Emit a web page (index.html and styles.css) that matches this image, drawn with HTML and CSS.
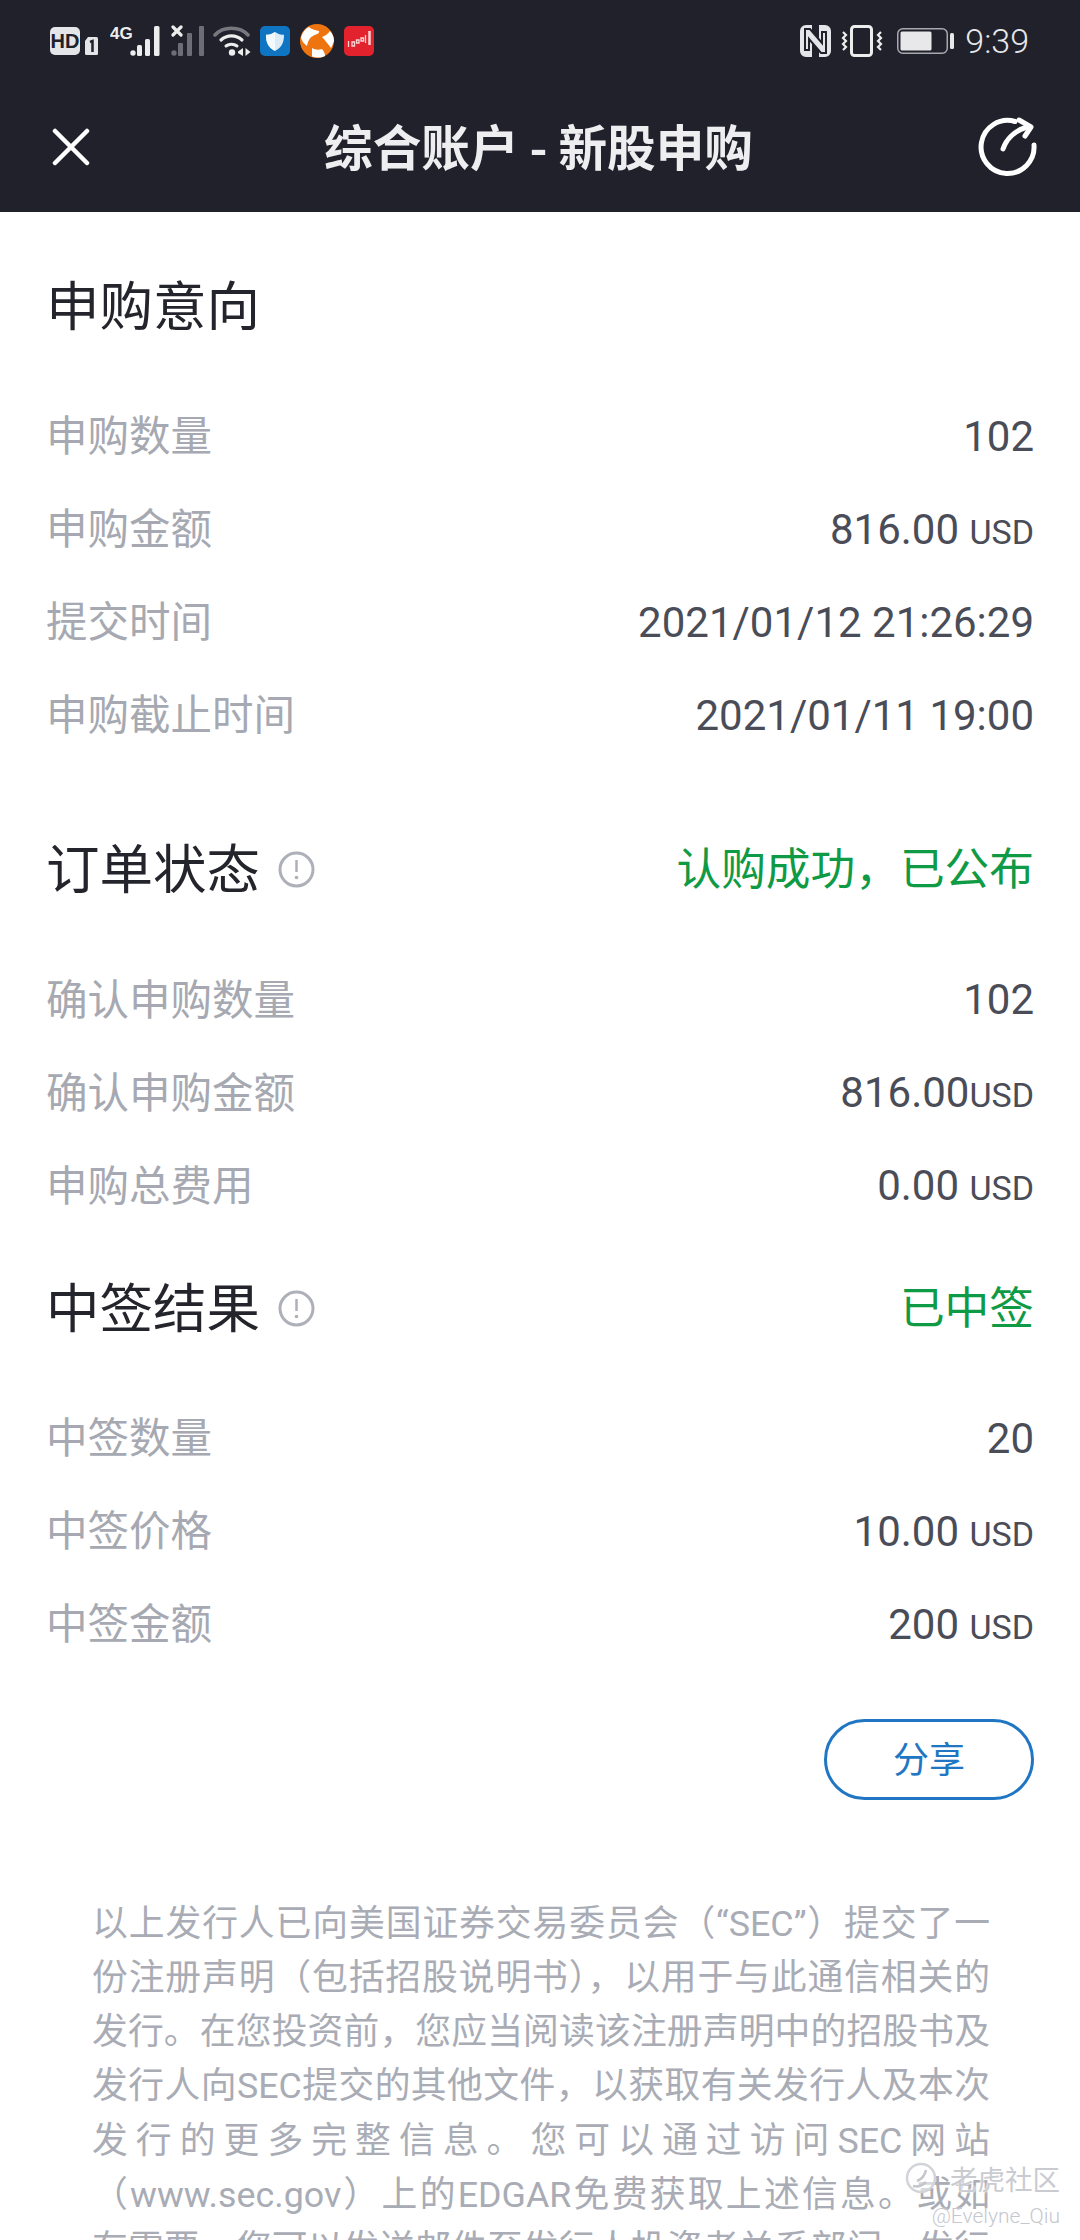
FILE: index.html
```html
<!DOCTYPE html>
<html lang="zh">
<head>
<meta charset="utf-8">
<title>综合账户 - 新股申购</title>
<link rel="stylesheet" href="styles.css">
</head>
<body>
<div class="page">
  <header class="header">
    <div class="statusbar">
      <div class="status-group">
        <svg class="i" width="48" height="30" viewBox="0 0 48 30"><rect x="0" y="1" width="30" height="28" rx="5" fill="#e4e5e8"/><text x="15" y="21.500" class="hd">HD</text><path d="M35 15l3-4h8.500a1.500 1.500 0 0 1 1.500 1.500v15a1.500 1.500 0 0 1-1.500 1.500h-10a1.500 1.500 0 0 1-1.500-1.500z" fill="#e4e5e8"/><path d="M40 16l2.500-1v11" fill="none" stroke="#20212b" stroke-width="2.500"/></svg>
        <svg class="i gap12" width="50" height="32" viewBox="0 0 50 32"><text x="0" y="13.500" class="fourg">4G</text><circle cx="23" cy="28" r="2.700" fill="#eceded"/><rect x="27" y="20" width="5" height="11" rx="1.500" fill="#eceded"/><rect x="35" y="14" width="5" height="17" rx="1.500" fill="#eceded"/><rect x="44" y="1" width="5.500" height="30" rx="1.500" fill="#eceded"/></svg>
        <svg class="i gap11" width="33" height="32" viewBox="0 0 33 32"><path d="M2 2l8 8M10 2l-8 8" stroke="#eceded" stroke-width="3.200" stroke-linecap="round"/><circle cx="3" cy="28" r="2.700" fill="#6d6e75"/><rect x="7" y="18" width="5" height="13" rx="1" fill="#6d6e75"/><rect x="16" y="8" width="5" height="23" rx="1" fill="#6d6e75"/><rect x="28" y="1" width="5" height="30" rx="1" fill="#6d6e75"/></svg>
        <svg class="i gap9" width="38" height="32" viewBox="0 0 38 32"><path d="M2 10C10 1 27 1 35 10" fill="none" stroke="#77787e" stroke-width="3.500" stroke-linecap="round"/><path d="M8 15c6-5.500 15-5.500 21 0" fill="none" stroke="#eceded" stroke-width="3.200" stroke-linecap="round"/><path d="M13 21c3-2.500 8-2.500 11 0" fill="none" stroke="#eceded" stroke-width="3" stroke-linecap="round"/><circle cx="19" cy="27.500" r="3.200" fill="#eceded"/><path d="M30 23v8l-5-3v-1.500zM32.500 23v8l5-4z" fill="#eceded"/></svg>
        <svg class="i gap9" width="30" height="30" viewBox="0 0 30 30"><rect width="30" height="30" rx="5" fill="#0f74c2"/><path d="M15 6c3 2 6 2.800 9 2.800 0 7.500-2 12.500-9 16.200-7-3.700-9-8.700-9-16.200 3 0 6-.8 9-2.800z" fill="#dcecf6"/><path d="M15 6c-3 2-6 2.800-9 2.800 0 7.500 2 12.500 9 16.200z" fill="#f4f9fc"/></svg>
        <svg class="i gap10" width="34" height="34" viewBox="0 0 34 34"><circle cx="17" cy="17" r="17" fill="#ee7410"/><path d="M9 3c3 3 7 3 10 4 1 3-3 3-6 5-4 2-5 6-6 10-3-2-5-5-6-8 1-5 4-9 8-11zM22 13c3-1 6-3 8-6 3 3 4 7 4 10-1 3-2 5-3 7-3-4-6-8-9-11zM12 24c3 2 7 2 10 1 2 2 3 5 3 7-4 2-9 2-13 .5z" fill="#fff"/><circle cx="17" cy="17" r="3" fill="#ee7410"/></svg>
        <svg class="i gap10" width="30" height="30" viewBox="0 0 30 30"><rect width="30" height="30" rx="5" fill="#e2222c"/><path d="M4.500 15v6M8 16h2.500v4H8zM12.500 14H15v3h-2.500zM17 12h2.500v3H17zM21.500 9v8" fill="none" stroke="#f8d4d6" stroke-width="1.300"/><path d="M25.500 5v14" stroke="#f8d4d6" stroke-width="2.500"/></svg>
      </div>
      <div class="status-group">
        <svg class="i" width="31" height="32" viewBox="0 0 31 32"><path d="M6 0h6v32H6a6 6 0 0 1-6-6V6a6 6 0 0 1 6-6zM25 0a6 6 0 0 1 6 6v20a6 6 0 0 1-6 6h-6V0z" fill="#e4e5e8"/><path d="M5 7v18h4V14l12 14h5V7h-4v11L10 4H5z" fill="#e4e5e8" stroke="#20212b" stroke-width="2"/></svg>
        <svg class="i gap10" width="42" height="32" viewBox="0 0 42 32"><rect x="10.500" y="1.500" width="20" height="29" rx="3" fill="none" stroke="#eceded" stroke-width="3"/><path d="M2 7l3 3-3 3 3 3-3 3 3 3-3 3M40 7l-3 3 3 3-3 3 3 3-3 3 3 3" fill="none" stroke="#eceded" stroke-width="2.200"/></svg>
        <svg class="i gap14" width="57" height="26" viewBox="0 0 57 26"><rect x=".75" y=".75" width="49.500" height="24.500" rx="5" fill="none" stroke="#a8a9ad" stroke-width="1.500"/><rect x="3.500" y="3.500" width="31" height="19" rx="1.500" fill="#e8e8ea"/><rect x="53" y="5" width="4" height="16" rx="1.500" fill="#e8e8ea"/></svg>
        <span class="clock">9:39</span>
      </div>
    </div>
    <nav class="nav">
      <svg class="close" width="38" height="38" viewBox="0 0 38 38"><path d="M3 3l32 32M35 3L3 35" stroke="#fff" stroke-width="4.500" stroke-linecap="round"/></svg>
      <h1 class="title">综合账户 - 新股申购</h1>
      <svg class="share" width="60" height="60" viewBox="0 0 60 60"><path d="M37 4.500A26.500 26.500 0 1 0 56 28" fill="none" stroke="#fff" stroke-width="5" stroke-linecap="round"/><path d="M25 32c3-9 11-18 24-22" fill="none" stroke="#fff" stroke-width="5" stroke-linecap="round"/><path d="M41 3l12 7-6 9" fill="none" stroke="#fff" stroke-width="5" stroke-linecap="round" stroke-linejoin="round"/></svg>
    </nav>
  </header>

  <main class="content">
    <section class="section sec-first">
      <div class="head"><h2 class="head-title">申购意向</h2></div>
      <div class="rows">
        <div class="row"><span class="label">申购数量</span><span class="value">102</span></div>
        <div class="row"><span class="label">申购金额</span><span class="value">816.00 <small class="unit">USD</small></span></div>
        <div class="row"><span class="label">提交时间</span><span class="value">2021/01/12 21:26:29</span></div>
        <div class="row"><span class="label">申购截止时间</span><span class="value">2021/01/11 19:00</span></div>
      </div>
    </section>

    <section class="section sec-second">
      <div class="head">
        <h2 class="head-title">订单状态</h2>
        <svg class="info" width="37" height="37" viewBox="0 0 37 37"><circle cx="18.500" cy="18.500" r="16.500" fill="none" stroke="#adb0b8" stroke-width="3"/><path d="M18.500 9v12" stroke="#adb0b8" stroke-width="2.500"/><circle cx="18.500" cy="26.500" r="1.800" fill="#adb0b8"/></svg>
        <span class="status">认购成功，已公布</span>
      </div>
      <div class="rows">
        <div class="row"><span class="label">确认申购数量</span><span class="value">102</span></div>
        <div class="row"><span class="label">确认申购金额</span><span class="value">816.00<small class="unit">USD</small></span></div>
        <div class="row"><span class="label">申购总费用</span><span class="value">0.00 <small class="unit">USD</small></span></div>
      </div>
    </section>

    <section class="section sec-third">
      <div class="head">
        <h2 class="head-title">中签结果</h2>
        <svg class="info" width="37" height="37" viewBox="0 0 37 37"><circle cx="18.500" cy="18.500" r="16.500" fill="none" stroke="#adb0b8" stroke-width="3"/><path d="M18.500 9v12" stroke="#adb0b8" stroke-width="2.500"/><circle cx="18.500" cy="26.500" r="1.800" fill="#adb0b8"/></svg>
        <span class="status">已中签</span>
      </div>
      <div class="rows">
        <div class="row"><span class="label">中签数量</span><span class="value">20</span></div>
        <div class="row"><span class="label">中签价格</span><span class="value">10.00 <small class="unit">USD</small></span></div>
        <div class="row"><span class="label">中签金额</span><span class="value">200 <small class="unit">USD</small></span></div>
      </div>
    </section>

    <div class="actions"><button class="share-btn">分享</button></div>

    <p class="disclaimer">以上发行人已向美国证券交易委员会（“SEC”）提交了一<br>份注册声明（包括招股说明书），以用于与此通信相关的<br>发行。在您投资前，您应当阅读该注册声明中的招股书及<br>发行人向SEC提交的其他文件，以获取有关发行人及本次<br>发行的更多完整信息。您可以通过访问SEC网站<br>（www.sec.gov）上的EDGAR免费获取上述信息。或如<br>有需要，您可以发送邮件至发行人投资者关系部门，发行</p>
  </main>

  <div class="watermark">
    <div class="wm-top">
      <svg width="32" height="32" viewBox="0 0 32 32"><circle cx="16" cy="16" r="14" fill="rgba(255,255,255,.55)" stroke="#d2d4d9" stroke-width="2.500"/><path d="M21 8c-1 5-4 9-9 11M8 24c4 1 9 0 13-4" fill="none" stroke="#c4c6cc" stroke-width="2.500"/></svg>
      <span class="wm-name">老虎社区</span>
    </div>
    <span class="wm-user">@Evelyne_Qiu</span>
  </div>
</div>
</body>
</html>
```

FILE: styles.css
```css
* { box-sizing: border-box; }
html, body { margin: 0; padding: 0; background: #fff; }
body { font-family: Roboto, "Noto Sans CJK SC", sans-serif; }
.page { position: relative; width: 1080px; height: 2240px; overflow: hidden; background: #fff; }

.header { height: 212px; background: #20212b; color: #eeeef0; }
.statusbar { height: 82px; padding: 0 51px 0 50px; display: flex; justify-content: space-between; align-items: center; }
.status-group { display: flex; align-items: center; }
.i { display: block; flex: none; }
.gap9 { margin-left: 9px; }
.gap10 { margin-left: 10px; }
.gap11 { margin-left: 11px; }
.gap12 { margin-left: 12px; }
.gap14 { margin-left: 14px; }
.hd { font: 700 20px "Liberation Sans", sans-serif; fill: #20212b; text-anchor: middle; }
.fourg { font: 700 17px "Liberation Sans", sans-serif; fill: #eceded; }
.clock { margin-left: 11px; font: 300 34px Roboto, sans-serif; color: #e8e8ea; }

.nav { height: 130px; padding: 0 42px 0 52px; display: flex; align-items: center; justify-content: space-between; }
.close { display: block; flex: none; }
.title { margin: 0 0 4px 9px; font: 700 48.600px "Noto Sans CJK SC", sans-serif; color: #eeeef0; }
.share { display: block; flex: none; }

.content { padding: 54px 46px 0 46px; }
.head { height: 80px; display: flex; align-items: center; }
.head-title { margin: 0 0 8px; font: 400 53.500px "Noto Sans CJK SC", sans-serif; color: #24252c; }
.info { display: block; margin-left: 18px; flex: none; }
.status { margin: 0 0 8px auto; font: 400 44.700px "Noto Sans CJK SC", sans-serif; color: #0f9a45; }
.sec-second { margin-top: 68px; }
.sec-third { margin-top: 36px; }
.rows { margin-top: 43.500px; }
.row { height: 93px; display: flex; justify-content: space-between; align-items: center; }
.label { padding-bottom: 6px; font: 400 41.500px "Noto Sans CJK SC", sans-serif; color: #a6a9b1; }
.value { font: 400 42px Roboto, sans-serif; color: #4a4d58; white-space: pre-wrap; }
.unit { font-size: 34px; }

.actions { margin-top: 48px; display: flex; justify-content: flex-end; }
.share-btn { width: 210px; height: 81px; padding: 0 0 4px; background: #fff; border: 3px solid #2176c4; border-radius: 41px; font: 400 36px "Noto Sans CJK SC", sans-serif; color: #2176c4; }

.disclaimer { margin: 97px 0 0 46px; width: 898px; font: 400 35.800px/54.300px Roboto, "Noto Sans CJK SC", sans-serif; color: #a9acb5; text-align: justify; text-align-last: justify; }

.watermark { position: absolute; right: 20px; top: 2162px; display: flex; flex-direction: column; align-items: flex-end; }
.wm-top { display: flex; align-items: center; gap: 13px; height: 32px; }
.wm-name { font: 400 27.500px/32px "Noto Sans CJK SC", sans-serif; color: #c9cbd1; text-shadow: 0 0 2px #fff, 0 0 3px #fff; }
.wm-user { margin-top: 10px; font: 300 21px/24px Roboto, sans-serif; color: #c6c8ce; text-shadow: 0 0 2px #fff; }
```
